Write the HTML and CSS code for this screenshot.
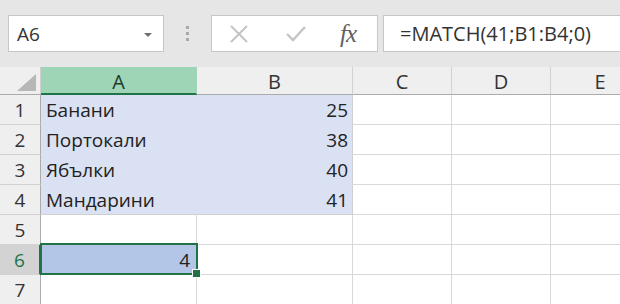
FILE: index.html
```html
<!DOCTYPE html>
<html lang="bg">
<head>
<meta charset="utf-8">
<link rel="stylesheet" href="styles.css">
</head>
<body>
<div class="toolbar">
  <div class="namebox">
    <span class="ref">A6</span>
    <span class="caret"></span>
  </div>
  <div class="grip"><i></i><i></i><i></i></div>
  <div class="iconbox">
    <svg class="ico" width="22" height="22" viewBox="0 0 22 22"><path d="M3 3 L19 19 M19 3 L3 19" stroke="#c4c4c4" stroke-width="2" fill="none"/></svg>
    <svg class="ico" width="24" height="22" viewBox="0 0 24 22"><path d="M3 11 L9 17 L21 4" stroke="#c4c4c4" stroke-width="2.4" fill="none"/></svg>
    <span class="fx">fx</span>
  </div>
  <div class="formula">=MATCH(41;B1:B4;0)</div>
</div>
<div class="sheet">
  <div class="corner"><span class="tri"></span></div>
  <div class="ch sel">A</div>
  <div class="ch">B</div>
  <div class="ch">C</div>
  <div class="ch">D</div>
  <div class="ch">E</div>

  <div class="rh">1</div>
  <div class="c hl">Банани</div>
  <div class="c hl num last">25</div>
  <div class="c"></div><div class="c"></div><div class="c"></div>

  <div class="rh">2</div>
  <div class="c hl">Портокали</div>
  <div class="c hl num last">38</div>
  <div class="c"></div><div class="c"></div><div class="c"></div>

  <div class="rh">3</div>
  <div class="c hl">Ябълки</div>
  <div class="c hl num last">40</div>
  <div class="c"></div><div class="c"></div><div class="c"></div>

  <div class="rh">4</div>
  <div class="c hl bottom">Мандарини</div>
  <div class="c hl num last bottom">41</div>
  <div class="c"></div><div class="c"></div><div class="c"></div>

  <div class="rh">5</div>
  <div class="c"></div><div class="c"></div><div class="c"></div><div class="c"></div><div class="c"></div>

  <div class="rh act">6</div>
  <div class="c active num">4</div>
  <div class="c"></div><div class="c"></div><div class="c"></div><div class="c"></div>

  <div class="rh">7</div>
  <div class="c"></div><div class="c"></div><div class="c"></div><div class="c"></div><div class="c"></div>
</div>
</body>
</html>
```
FILE: styles.css
```css
* { box-sizing: border-box; }
html, body { margin: 0; padding: 0; }
body {
  width: 620px;
  height: 304px;
  overflow: hidden;
  background: #e6e6e6;
  font-family: "Open Sans", "Noto Sans", sans-serif;
  color: #222;
}
.toolbar {
  height: 67px;
  display: flex;
  align-items: flex-start;
  padding: 15px 0 0 8px;
}
.namebox {
  width: 156px;
  height: 37px;
  background: #fff;
  border: 1px solid #c6c6c6;
  display: flex;
  align-items: center;
  justify-content: space-between;
  padding: 0 11px 0 8px;
}
.ref { font-size: 19px; color: #333; }
.caret {
  width: 0; height: 0;
  border-left: 4px solid transparent;
  border-right: 4px solid transparent;
  border-top: 4px solid #707070;
  margin-top: 2px;
}
.grip {
  width: 47px;
  height: 37px;
  display: flex;
  flex-direction: column;
  align-items: center;
  justify-content: center;
  gap: 3px;
}
.grip i {
  display: block;
  width: 3px; height: 3px;
  background: #a9a9a9;
}
.iconbox {
  width: 167px;
  height: 37px;
  background: #fff;
  border: 1px solid #c6c6c6;
  display: flex;
  align-items: center;
  padding-left: 16px;
  gap: 34px;
}
.fx {
  font-family: "Liberation Serif", serif;
  font-style: italic;
  font-size: 25px;
  color: #5f5f5f;
  margin-left: -2px;
  letter-spacing: -1px;
  line-height: 1;
}
.formula {
  flex: 1;
  height: 37px;
  margin-left: 5px;
  background: #fff;
  border: 1px solid #c6c6c6;
  border-right: none;
  padding-left: 16px;
  font-size: 20px;
  line-height: 35px;
  color: #333;
  white-space: nowrap;
}
.sheet {
  display: grid;
  grid-template-columns: 41px 156px 156px 99px 99px 99px;
  grid-template-rows: 28px repeat(7, 30px);
  background: #fff;
}
.corner {
  background: #efefef;
  border-right: 1px solid #cfcfcf;
  border-bottom: 1px solid #ababab;
  position: relative;
}
.tri {
  position: absolute;
  right: 4px;
  bottom: 3px;
  width: 0; height: 0;
  border-left: 19px solid transparent;
  border-bottom: 17px solid #b7b7b7;
}
.ch {
  background: #efefef;
  border-right: 1px solid #d2d2d2;
  border-bottom: 1px solid #ababab;
  text-align: center;
  font-size: 20px;
  line-height: 29px;
  color: #333;
}
.ch.sel {
  background: #9fd5b7;
  border-bottom: 2px solid #217346;
  border-right-color: #9fd5b7;
  color: #1e3b2c;
}
.rh {
  background: #efefef;
  border-right: 1px solid #ababab;
  border-bottom: 1px solid #d2d2d2;
  text-align: center;
  font-size: 19px;
  line-height: 31px;
  color: #333;
}
.rh.act {
  background: #d3d3d3;
  color: #217346;
  border-right: 2px solid #217346;
}
.c {
  border-right: 1px solid #d9d9d9;
  border-bottom: 1px solid #d9d9d9;
  font-size: 19px;
  line-height: 31px;
  padding: 0 4px 0 5px;
  white-space: nowrap;
}
.c.hl {
  background: #dae1f2;
  border-right-color: #dae1f2;
  border-bottom-color: #dae1f2;
}
.c.hl.last { border-right-color: #d0d0d0; }
.c.hl.bottom { border-bottom-color: #d0d0d0; }
.num { text-align: right; }
.c.active {
  background: #b4c6e7;
  position: relative;
  padding-right: 6px;
}
.c.active::after {
  content: "";
  position: absolute;
  left: -1px; top: -2px; right: -2px; bottom: -1px;
  border: 2px solid #217346;
}
.c.active::before {
  content: "";
  position: absolute;
  right: -5px;
  bottom: -4px;
  width: 7px; height: 7px;
  background: #217346;
  border: 1px solid #fff;
  z-index: 2;
}
```
